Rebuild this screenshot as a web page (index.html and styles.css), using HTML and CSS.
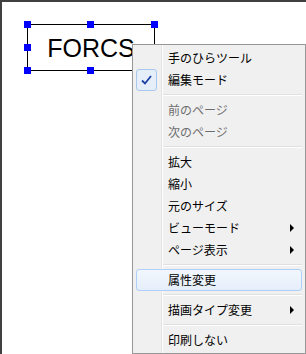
FILE: index.html
```html
<!DOCTYPE html>
<html lang="ja">
<head>
    <meta charset="UTF-8">
    <meta name="viewport" content="width=device-width, initial-scale=1.0">
    <title>Designer</title>
    <link rel="stylesheet" href="styles.css">
</head>
<body>
    <div class="canvas">
        <div class="shape">
            <span class="shape-text">FORCS</span>
            <span class="handle h-tl"></span>
            <span class="handle h-tc"></span>
            <span class="handle h-tr"></span>
            <span class="handle h-ml"></span>
            <span class="handle h-mr"></span>
            <span class="handle h-bl"></span>
            <span class="handle h-bc"></span>
            <span class="handle h-br"></span>
        </div>

        <ul class="context-menu">
            <li class="menu-item">手のひらツール</li>
            <li class="menu-item checked">
                <span class="check-box">
                    <svg width="11" height="10" viewBox="0 0 11 10"><path d="M1 5.5 L4 8.5 L10 1" fill="none" stroke="#1c3fa8" stroke-width="1.8"/></svg>
                </span>
                編集モード
            </li>
            <li class="menu-sep"></li>
            <li class="menu-item disabled">前のページ</li>
            <li class="menu-item disabled">次のページ</li>
            <li class="menu-sep"></li>
            <li class="menu-item">拡大</li>
            <li class="menu-item">縮小</li>
            <li class="menu-item">元のサイズ</li>
            <li class="menu-item submenu">ビューモード</li>
            <li class="menu-item submenu">ページ表示</li>
            <li class="menu-sep"></li>
            <li class="menu-item hover">属性変更</li>
            <li class="menu-sep"></li>
            <li class="menu-item submenu">描画タイプ変更</li>
            <li class="menu-sep"></li>
            <li class="menu-item">印刷しない</li>
        </ul>
    </div>
</body>
</html>
```

FILE: styles.css
```css
html, body {
    margin: 0;
    padding: 0;
}
body {
    width: 306px;
    height: 354px;
    overflow: hidden;
    background: #fff;
    font-family: "Noto Sans CJK JP", "Liberation Sans", sans-serif;
}
.canvas {
    position: relative;
    width: 306px;
    height: 354px;
    box-sizing: border-box;
    border-top: 2px solid #404040;
    border-left: 2px solid #404040;
}

/* selected shape on the design canvas */
.shape {
    position: absolute;
    left: 25px;
    top: 22px;
    width: 128px;
    height: 47px;
    box-sizing: border-box;
    border: 1px solid #000;
    display: flex;
    align-items: center;
    justify-content: center;
}
.shape-text {
    font-family: "Liberation Sans", Arial, sans-serif;
    font-size: 25px;
    color: #000;
    padding-top: 2px;
}
.handle {
    position: absolute;
    width: 7px;
    height: 7px;
    background: #0000ff;
}
.h-tl { left: -4px; top: -4px; }
.h-tc { left: 59px; top: -4px; }
.h-tr { right: -4px; top: -4px; }
.h-ml { left: -4px; top: 19px; }
.h-mr { right: -4px; top: 19px; }
.h-bl { left: -4px; bottom: -4px; }
.h-bc { left: 59px; bottom: -4px; }
.h-br { right: -4px; bottom: -4px; }

/* context menu */
.context-menu {
    position: absolute;
    left: 130px;
    top: 42px;
    width: 174px;
    height: 310px;
    box-sizing: border-box;
    margin: 0;
    padding: 2px 3px;
    list-style: none;
    border: 1px solid #979797;
    background: linear-gradient(to right, #f0f0f0 28px, #e2e3e3 28px, #e2e3e3 29px, #fff 29px, #fff 30px, #f0f0f0 30px);
    font-size: 12px;
    color: #000;
}
.menu-item {
    position: relative;
    height: 22px;
    line-height: 22px;
    padding-left: 32px;
    box-sizing: border-box;
    white-space: nowrap;
}
.menu-item.disabled {
    color: #6d6d6d;
}
.menu-item.hover {
    border: 1px solid #aecff7;
    border-radius: 3px;
    line-height: 20px;
    padding-left: 31px;
    background: linear-gradient(to bottom, #f2f7fd, #e5eefa);
}
.menu-item.submenu::after {
    content: "";
    position: absolute;
    right: 8px;
    top: 7px;
    border-left: 4px solid #000;
    border-top: 4px solid transparent;
    border-bottom: 4px solid transparent;
}
.check-box {
    position: absolute;
    left: 0;
    top: 0;
    width: 21px;
    height: 22px;
    box-sizing: border-box;
    border: 1px solid #a8c8ee;
    border-radius: 3px;
    background: #e6eef9;
    display: flex;
    align-items: center;
    justify-content: center;
}
.menu-sep {
    height: 8px;
    margin-left: 27px;
    box-sizing: border-box;
    padding-top: 3px;
}
.menu-sep::before {
    content: "";
    display: block;
    height: 1px;
    background: #e0e0e0;
    border-bottom: 1px solid #fff;
}
```
